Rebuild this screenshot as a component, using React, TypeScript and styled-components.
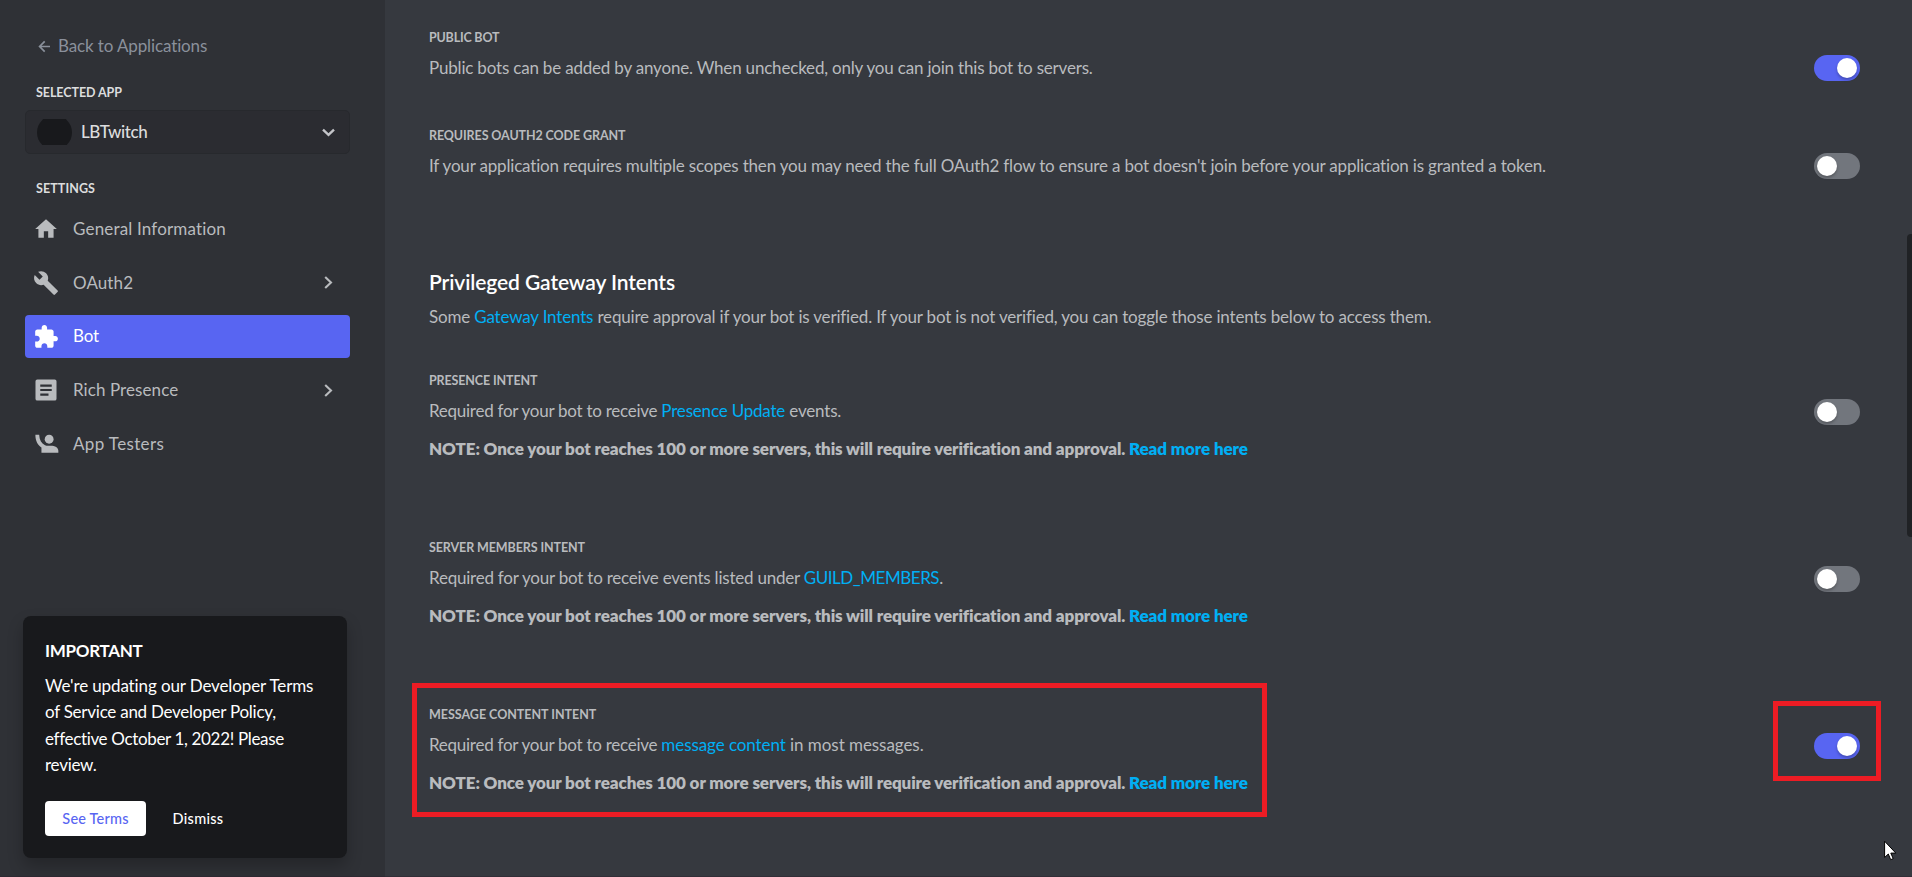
import React from "react";
import styled, { createGlobalStyle, css } from "styled-components";

const GlobalStyle = createGlobalStyle`
  * { box-sizing: border-box; }
  html, body { margin: 0; height: 100%; overflow: hidden; }
  body {
    background: #36393f;
    font-family: Lato, "Open Sans", sans-serif;
    font-size: 17px;
    line-height: 24px;
    font-variant-ligatures: none;
  }
`;

const text = css<{ $track?: number }>`
  letter-spacing: ${(p) => p.$track ?? 0}px;
  white-space: nowrap;
`;

const Shell = styled.div`
  position: relative;
  display: flex;
  width: 1912px;
  height: 877px;
  overflow: hidden;
`;

/* Sidebar */

const Sidebar = styled.aside`
  display: flex;
  flex-direction: column;
  flex: 0 0 385px;
  padding: 34px 35px 19px 25px;
  background: #2f3136;
`;

const BackLink = styled.a`
  display: flex;
  align-items: center;
  gap: 7px;
  height: 24px;
  padding-left: 13px;
  color: #8a909b;
`;

const NavHeading = styled.h3<{ $track?: number; $top: number }>`
  ${text}
  margin: ${(p) => p.$top}px 0 0 11px;
  font-size: 12.5px;
  line-height: 16px;
  font-weight: 700;
  color: #dcddde;
`;

const AppSelect = styled.div`
  display: flex;
  align-items: center;
  height: 44px;
  margin-top: 9px;
  padding: 0 14px 0 11px;
  border: 1px solid #27292d;
  border-radius: 5px;
  background: #2b2c31;
`;

const AvatarClip = styled.div`
  display: flex;
  align-items: center;
  width: 35px;
  height: 26px;
  overflow: hidden;
`;

const Avatar = styled.div`
  flex: none;
  width: 35px;
  height: 35px;
  border-radius: 50%;
  background: #18191c;
`;

const AppName = styled.span<{ $track?: number }>`
  ${text}
  flex: 1;
  margin-left: 9px;
  font-weight: 500;
  color: #dcddde;
`;

const Nav = styled.nav`
  display: flex;
  flex-direction: column;
  gap: 10.75px;
  margin-top: 10.5px;
`;

const NavItem = styled.a<{ $active?: boolean }>`
  display: flex;
  align-items: center;
  height: 43px;
  padding: 0 15px 0 8px;
  border-radius: 4px;
  background: ${(p) => (p.$active ? "#5865f2" : "transparent")};
  color: ${(p) => (p.$active ? "#ffffff" : "#b9bbbe")};
`;

const NavLabel = styled.span<{ $track?: number }>`
  ${text}
  flex: 1;
  margin-left: 14px;
  padding-bottom: 0.5px;
`;

/* Announcement card */

const Notice = styled.section`
  width: 324px;
  height: 242px;
  margin: auto 0 0 -2px;
  padding: 22px;
  border-radius: 8px;
  background: #18191c;
  box-shadow: 0 8px 16px rgba(0, 0, 0, 0.24);
  color: #ffffff;
`;

const NoticeTitle = styled.h2<{ $track?: number }>`
  ${text}
  margin: 0;
  font-size: 17px;
  line-height: 26px;
  font-weight: 700;
`;

const NoticeLine = styled.div<{ $track?: number }>`
  ${text}
  line-height: 26.4px;
`;

const NoticeBody = styled.div`
  margin-top: 9px;
`;

const NoticeActions = styled.div`
  display: flex;
  align-items: center;
  gap: 26px;
  margin-top: 22.4px;
`;

const Button = styled.button<{ $track?: number; $solid?: boolean }>`
  ${text}
  width: ${(p) => (p.$solid ? 101 : 52)}px;
  height: 35px;
  padding: 0;
  border: 0;
  border-radius: 4px;
  background: ${(p) => (p.$solid ? "#ffffff" : "transparent")};
  color: ${(p) => (p.$solid ? "#5865f2" : "#ffffff")};
  font: 500 14.5px Lato, sans-serif;
`;

/* Main column */

const Main = styled.main`
  flex: 1;
  padding: 30px 52px 0 44px;
`;

const Setting = styled.section<{ $gap?: number }>`
  display: flex;
  justify-content: space-between;
  align-items: flex-start;
  margin-top: ${(p) => p.$gap ?? 0}px;
`;

const Label = styled.h5<{ $track?: number }>`
  ${text}
  margin: 0 0 10px;
  font-size: 12.5px;
  line-height: 16px;
  font-weight: 700;
  color: #b9bbbe;
`;

const Copy = styled.p`
  margin: 0;
  color: #b9bbbe;
  white-space: nowrap;
`;

const Note = styled(Copy)`
  margin-top: 14px;
  font-weight: 800;
`;

const Run = styled.span<{ $track?: number }>`
  ${text}
`;

const Link = styled.a<{ $track?: number }>`
  ${text}
  color: #00aff4;
`;

const SectionTitle = styled.h2<{ $track?: number }>`
  ${text}
  margin: 89px 0 9px;
  font-size: 21px;
  line-height: 28px;
  font-weight: 600;
  color: #ffffff;
`;

const Track = styled.div<{ $on?: boolean; $top: number }>`
  display: flex;
  justify-content: ${(p) => (p.$on ? "flex-end" : "flex-start")};
  width: 46px;
  height: 26px;
  margin-top: ${(p) => p.$top}px;
  padding: 3px;
  border-radius: 13px;
  background: ${(p) => (p.$on ? "#5865f2" : "#72767d")};
`;

const Knob = styled.div`
  width: 20px;
  height: 20px;
  border-radius: 50%;
  background: #ffffff;
  box-shadow: 0 2px 3px rgba(0, 0, 0, 0.25);
`;

const ScrollThumb = styled.div`
  position: absolute;
  top: 234px;
  right: 0;
  width: 5px;
  height: 303px;
  border-radius: 4px 0 0 4px;
  background: #202225;
`;

/* Callout rectangles drawn on top of the page */

const Callout = styled.div<{ $x: number; $y: number; $w: number; $h: number }>`
  position: absolute;
  left: ${(p) => p.$x}px;
  top: ${(p) => p.$y}px;
  width: ${(p) => p.$w}px;
  height: ${(p) => p.$h}px;
  border: 5px solid #ed1c24;
`;

const Pointer = styled.svg`
  position: absolute;
  left: 1884px;
  top: 840px;
`;

const BottomEdge = styled.div`
  position: absolute;
  left: 0;
  right: 0;
  bottom: 0;
  height: 1px;
  background: rgba(44, 30, 44, 0.4);
`;

const Icon = ({ children }: { children: React.ReactNode }) => (
  <svg width="26" height="26" viewBox="0 0 24 24" fill="currentColor">
    {children}
  </svg>
);

const icons = {
  home: <path d="M10 20v-6h4v6h5v-8h3L12 3 2 12h3v8z" />,
  wrench: (
    <path d="M22.7 19l-9.1-9.1c.9-2.3.4-5-1.5-6.9-2-2-5-2.4-7.4-1.3L9 6 6 9 1.6 4.7C.4 7.1.9 10.1 2.9 12.1c1.9 1.9 4.6 2.4 6.9 1.5l9.1 9.1c.4.4 1 .4 1.4 0l2.3-2.3c.5-.4.5-1.1.1-1.4z" />
  ),
  puzzle: (
    <path d="M20.5 11H19V7c0-1.1-.9-2-2-2h-4V3.5C13 2.12 11.88 1 10.5 1S8 2.12 8 3.5V5H4c-1.1 0-1.99.9-1.99 2v3.8H3.5c1.49 0 2.7 1.21 2.7 2.7s-1.21 2.7-2.7 2.7H2V20c0 1.1.9 2 2 2h3.8v-1.5c0-1.49 1.21-2.7 2.7-2.7 1.49 0 2.7 1.21 2.7 2.7V22H17c1.1 0 2-.9 2-2v-4h1.5c1.38 0 2.5-1.12 2.5-2.5S21.88 11 20.5 11z" />
  ),
  article: (
    <path
      fillRule="evenodd"
      d="M4 2.3h16A1.7 1.7 0 0 1 21.7 4v16a1.7 1.7 0 0 1-1.7 1.7H4A1.7 1.7 0 0 1 2.3 20V4A1.7 1.7 0 0 1 4 2.3zM6.7 7v1.9h10.6V7zm0 4.1V13h10.6v-1.9zm0 4.2v1.9h7.6v-1.9z"
    />
  ),
  tester: (
    <>
      <circle cx="14.9" cy="7.6" r="4.1" />
      <path d="M2.2 3.5h3.5c.2 4.8 2 8 5.4 9.6.9.4 1.7.6 2.7.6h2.4c4.2 0 7.2 1.8 7.2 4.6v1.8H7.8v-4.9C4.300 13 2.200 9 2.200 3.500z" />
    </>
  ),
};

const Chevron = ({ down }: { down?: boolean }) => (
  <svg width="13" height="13" viewBox="0 0 13 13" fill="none" stroke={down ? "#c4c5c9" : "#b9bbbe"}>
    {down ? (
      <path d="M1 3.6l5.5 5.2L12 3.6" strokeWidth="2.4" />
    ) : (
      <path d="M3.2 .9l5.8 5.6-5.8 5.6" strokeWidth="2.1" />
    )}
  </svg>
);

const navItems: { icon: keyof typeof icons; label: string; track: number; active?: boolean; more?: boolean }[] = [
  { icon: "home", label: "General Information", track: 0.17 },
  { icon: "wrench", label: "OAuth2", track: 0.1, more: true },
  { icon: "puzzle", label: "Bot", track: -0.2, active: true },
  { icon: "article", label: "Rich Presence", track: 0.08, more: true },
  { icon: "tester", label: "App Testers", track: 0.36 },
];

const Toggle = ({ on, top = 25 }: { on?: boolean; top?: number }) => (
  <Track $on={on} $top={top}>
    <Knob />
  </Track>
);

const ApprovalNote = () => (
  <Note>
    <Run $track={-0.115}>
      NOTE: Once your bot reaches 100 or more servers, this will require verification and approval.{" "}
    </Run>
    <Link $track={-0.115}>Read more here</Link>
  </Note>
);

export default function App() {
  return (
    <Shell>
      <GlobalStyle />
      <Sidebar>
        <BackLink>
          <svg width="13" height="13" viewBox="0 0 13 13" fill="none" stroke="currentColor" strokeWidth="1.7">
            <path d="M12 6.5H2M6.7 1.3L1.6 6.5l5.1 5.2" />
          </svg>
          <Run $track={-0.12}>Back to Applications</Run>
        </BackLink>
        <NavHeading $top={27} $track={-0.07}>SELECTED APP</NavHeading>
        <AppSelect>
          <AvatarClip>
            <Avatar />
          </AvatarClip>
          <AppName $track={-0.4}>LBTwitch</AppName>
          <Chevron down />
        </AppSelect>
        <NavHeading $top={27} $track={0.09}>SETTINGS</NavHeading>
        <Nav>
          {navItems.map((item) => (
            <NavItem key={item.label} $active={item.active}>
              <Icon>{icons[item.icon]}</Icon>
              <NavLabel $track={item.track}>{item.label}</NavLabel>
              {item.more && <Chevron />}
            </NavItem>
          ))}
        </Nav>
        <Notice>
          <NoticeTitle $track={-0.29}>IMPORTANT</NoticeTitle>
          <NoticeBody>
            <NoticeLine $track={-0.12}>We're updating our Developer Terms</NoticeLine>
            <NoticeLine $track={-0.25}>of Service and Developer Policy,</NoticeLine>
            <NoticeLine $track={-0.34}>effective October 1, 2022! Please</NoticeLine>
            <NoticeLine $track={-0.25}>review.</NoticeLine>
          </NoticeBody>
          <NoticeActions>
            <Button $solid $track={0.19}>See Terms</Button>
            <Button $track={0.3}>Dismiss</Button>
          </NoticeActions>
        </Notice>
      </Sidebar>

      <Main>
        <Setting>
          <div>
            <Label $track={-0.2}>PUBLIC BOT</Label>
            <Copy>
              <Run $track={-0.19}>
                Public bots can be added by anyone. When unchecked, only you can join this bot to servers.
              </Run>
            </Copy>
          </div>
          <Toggle on />
        </Setting>
        <Setting $gap={47}>
          <div>
            <Label $track={-0.1}>REQUIRES OAUTH2 CODE GRANT</Label>
            <Copy>
              <Run $track={-0.18}>
                If your application requires multiple scopes then you may need the full OAuth2 flow to ensure a bot
                doesn't join before your application is granted a token.
              </Run>
            </Copy>
          </div>
          <Toggle />
        </Setting>

        <SectionTitle $track={-0.1}>Privileged Gateway Intents</SectionTitle>
        <Copy>
          <Run $track={-0.18}>Some </Run>
          <Link $track={-0.18}>Gateway Intents</Link>
          <Run $track={-0.178}>
            {" "}
            require approval if your bot is verified. If your bot is not verified, you can toggle those intents below
            to access them.
          </Run>
        </Copy>

        <Setting $gap={44}>
          <div>
            <Label $track={-0.13}>PRESENCE INTENT</Label>
            <Copy>
              <Run $track={-0.26}>Required for your bot to receive </Run>
              <Link $track={-0.19}>Presence Update</Link>
              <Run $track={-0.19}> events.</Run>
            </Copy>
            <ApprovalNote />
          </div>
          <Toggle top={25.5} />
        </Setting>
        <Setting $gap={79}>
          <div>
            <Label $track={-0.1}>SERVER MEMBERS INTENT</Label>
            <Copy>
              <Run $track={-0.22}>Required for your bot to receive events listed under </Run>
              <Link $track={-0.45}>GUILD_MEMBERS</Link>
              <Run>.</Run>
            </Copy>
            <ApprovalNote />
          </div>
          <Toggle top={25.5} />
        </Setting>
        <Setting $gap={79}>
          <div>
            <Label $track={-0.02}>MESSAGE CONTENT INTENT</Label>
            <Copy>
              <Run $track={-0.26}>Required for your bot to receive </Run>
              <Link $track={-0.08}>message content</Link>
              <Run $track={-0.06}> in most messages.</Run>
            </Copy>
            <ApprovalNote />
          </div>
          <Toggle on top={26} />
        </Setting>
      </Main>

      <ScrollThumb />
      <BottomEdge />
      <Callout $x={412} $y={683} $w={855} $h={134} />
      <Callout $x={1773} $y={701} $w={108} $h={80} />
      <Pointer width="13" height="21" viewBox="0 0 13 21">
        <path
          d="M.6 1.2v16.3l3.7-3.5 2.4 5.7 2.5-1.1-2.4-5.5h5z"
          fill="#ffffff"
          stroke="#000000"
          strokeWidth="1"
        />
      </Pointer>
    </Shell>
  );
}
